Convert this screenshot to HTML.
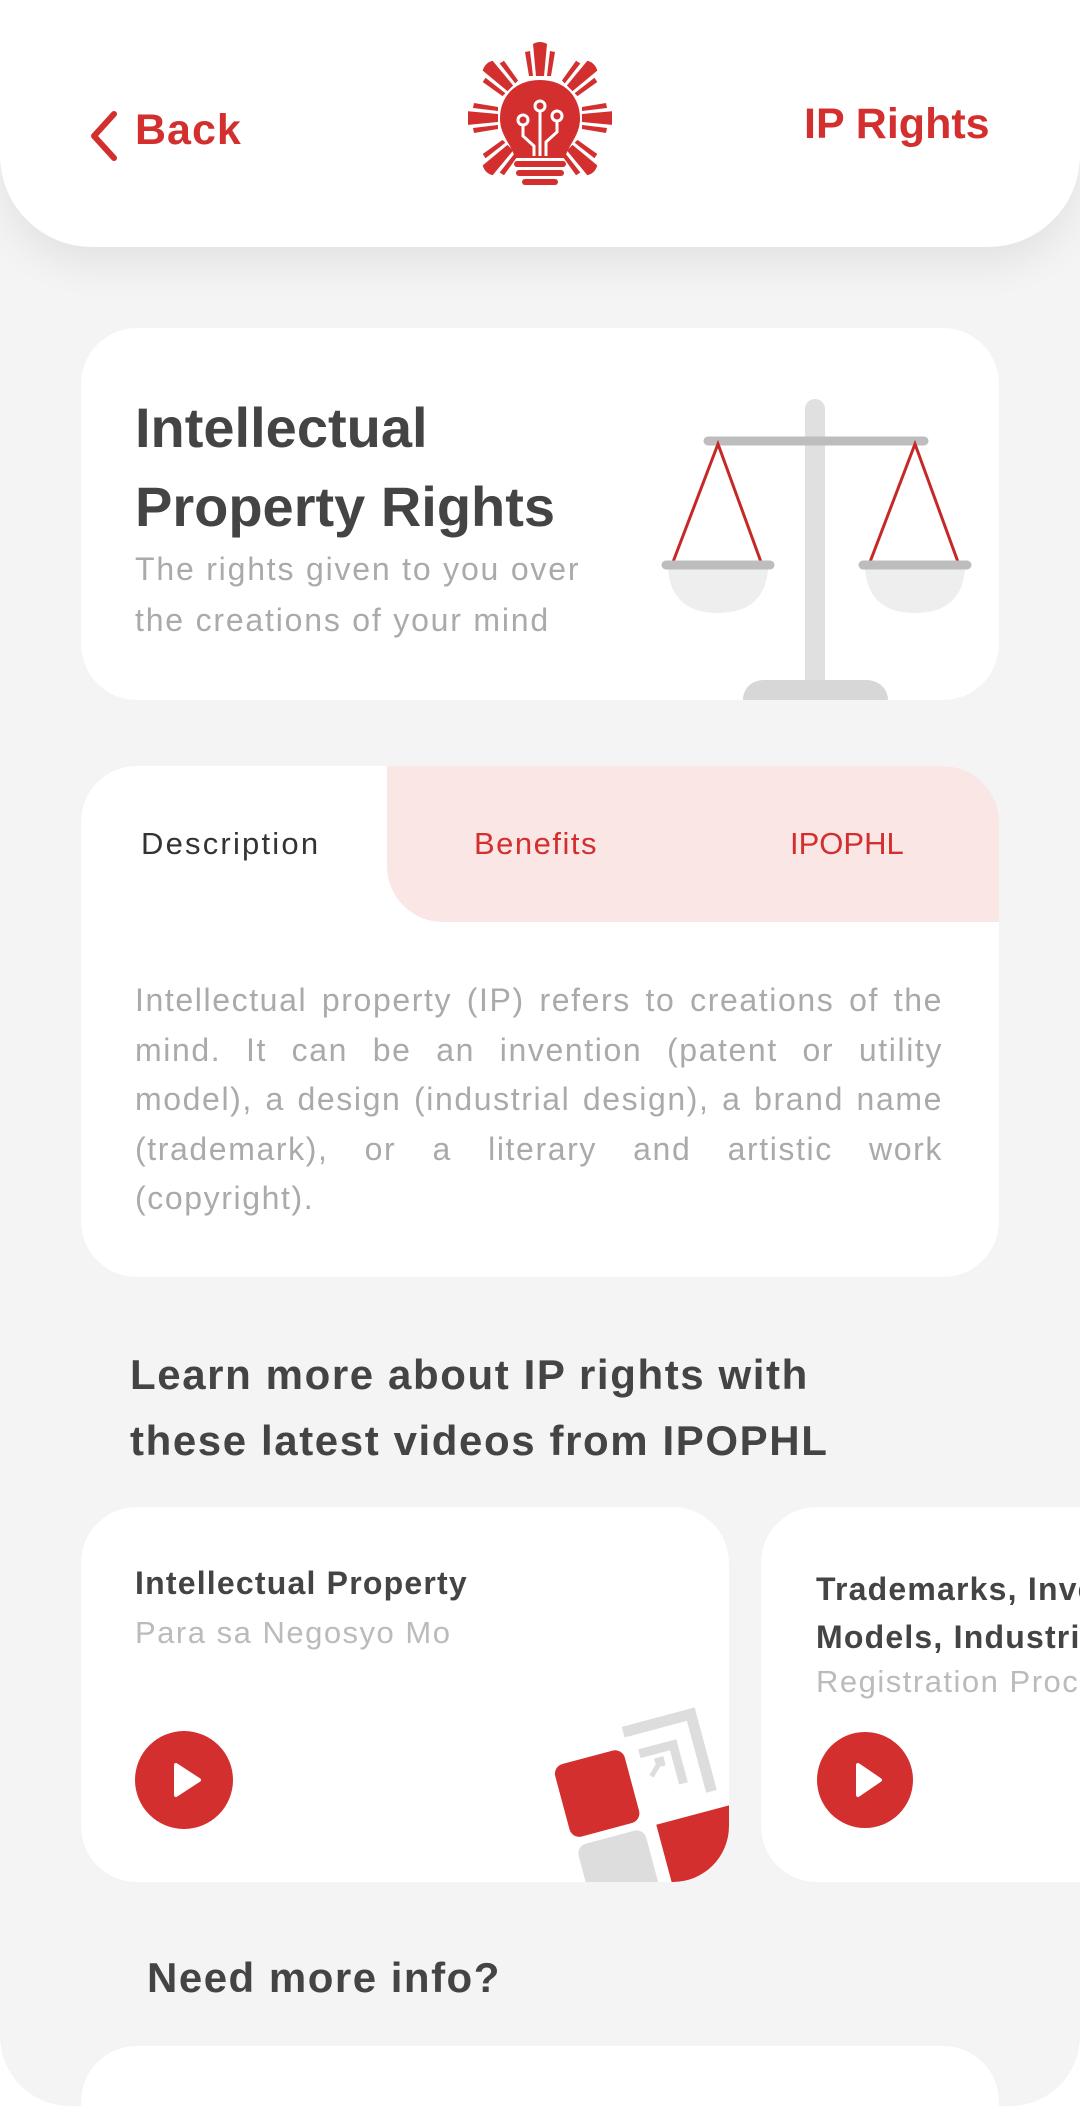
<!DOCTYPE html>
<html><head><meta charset="utf-8"><style>
*{margin:0;padding:0;box-sizing:border-box}
html,body{width:1080px;height:2106px;background:#fff;overflow:hidden;font-family:"Liberation Sans",sans-serif}
#wrap{position:absolute;left:0;top:0;width:1080px;height:2106px;background:#f4f4f4;border-radius:0 0 70px 70px;overflow:hidden}
.abs{position:absolute}
.card{position:absolute;background:#fff;border-radius:56px}
.t{position:absolute;white-space:nowrap}
</style></head><body><div id="wrap">
<div class="abs" style="left:0;top:-60px;width:1080px;height:307px;background:#fff;border-radius:0 0 92px 92px;box-shadow:0 18px 40px rgba(0,0,0,0.07)"></div>
<svg class="abs" style="left:86px;top:110px" width="36" height="52" viewBox="0 0 36 52"><path d="M28 4 L8 26 L28 48" fill="none" stroke="#d32f2f" stroke-width="6" stroke-linecap="round" stroke-linejoin="round"/></svg>
<div class="t" style="left:135px;top:106px;font-size:43px;font-weight:bold;color:#d32f2f;letter-spacing:1px">Back</div>
<div class="t" style="left:804px;top:100px;font-size:43px;font-weight:bold;color:#d32f2f">IP Rights</div>
<svg class="abs" style="left:468px;top:42px" width="144" height="148" viewBox="0 0 144 148">
<g fill="#d32f2f">
<g id="r"><path d="M65 2 Q72 -2 79 2 L76 34 L68 34 Z"/><path d="M57 10 L62 9 L65 34 L61 34 Z"/><path d="M82 9 L87 10 L83 34 L79 34 Z"/></g>
<use href="#r" transform="rotate(45 72 76)"/><use href="#r" transform="rotate(90 72 76)"/><use href="#r" transform="rotate(135 72 76)"/>
<use href="#r" transform="rotate(-45 72 76)"/><use href="#r" transform="rotate(-90 72 76)"/><use href="#r" transform="rotate(-135 72 76)"/>
<circle cx="72" cy="76" r="40" fill="#fff"/>
<path d="M72 38 C98 38 112 56 112 76 C112 94 101 101 97 116 L47 116 C43 101 32 94 32 76 C32 56 46 38 72 38 Z"/>
<rect x="46" y="119" width="52" height="6" rx="3"/><rect x="48" y="128" width="48" height="6" rx="3"/><rect x="54" y="137" width="36" height="6" rx="3"/>
</g>
<g fill="none" stroke="#fff" stroke-width="3"><circle cx="72" cy="64" r="5"/><circle cx="55" cy="78" r="5"/><circle cx="89" cy="74" r="5"/>
<path d="M72 69 V114 M55 83 V94 L66 104 V114 M89 79 V90 L78 100 V114"/></g>
</svg>

<div class="card" style="left:81px;top:328px;width:918px;height:372px;overflow:hidden">
<div class="t" style="left:54px;top:60px;font-size:56px;font-weight:bold;color:#444;line-height:79px">Intellectual<br>Property Rights</div>
<div class="t" style="left:54px;top:216px;font-size:32px;color:#aaa;line-height:51px;letter-spacing:1.8px">The rights given to you over<br>the creations of your mind</div>
<svg class="abs" style="left:0;top:0" width="918" height="372" viewBox="81 328 918 372">
<rect x="805" y="399" width="20" height="300" rx="10" fill="#e0e0e0"/>
<path d="M743 700 V700 C743 690 750 680 765 680 H866 C880 680 888 690 888 700 Z" fill="#d7d7d7"/>
<line x1="708" y1="441" x2="924" y2="441" stroke="#bdbdbd" stroke-width="9" stroke-linecap="round"/>
<path d="M668 569 H768 C766 595 752 613 718 613 C684 613 670 595 668 569 Z" fill="#eee"/>
<path d="M865 569 H965 C963 595 949 613 915 613 C881 613 867 595 865 569 Z" fill="#eee"/>
<path d="M673 562 L718 444 L761 562 M870 562 L915 444 L958 562" fill="none" stroke="#c62828" stroke-width="3"/>
<line x1="666" y1="565" x2="770" y2="565" stroke="#bdbdbd" stroke-width="9" stroke-linecap="round"/>
<line x1="863" y1="565" x2="967" y2="565" stroke="#bdbdbd" stroke-width="9" stroke-linecap="round"/>
</svg>
</div>

<div class="card" style="left:81px;top:766px;width:918px;height:511px;overflow:hidden">
<div class="abs" style="left:306px;top:0;width:612px;height:156px;background:#f9e6e5;border-radius:0 56px 0 56px"></div>
<div class="t" style="left:60px;top:60px;font-size:31px;color:#333;letter-spacing:2.2px">Description</div>
<div class="t" style="left:393px;top:60px;font-size:31px;color:#d32f2f;letter-spacing:1.5px">Benefits</div>
<div class="t" style="left:709px;top:60px;font-size:31px;color:#d32f2f">IPOPHL</div>
<div class="abs" style="left:54px;top:210px;width:808px;font-size:32px;line-height:49.5px;color:#aaa;text-align:justify;letter-spacing:1.6px">Intellectual property (IP) refers to creations of the mind. It can be an invention (patent or utility model), a design (industrial design), a brand name (trademark), or a literary and artistic work (copyright).</div>
</div>

<div class="t" style="left:130px;top:1342px;font-size:42px;font-weight:bold;color:#444;line-height:66px;letter-spacing:1.6px">Learn more about IP rights with<br>these latest videos from IPOPHL</div>

<div class="card" style="left:81px;top:1507px;width:648px;height:375px;overflow:hidden">
<div class="t" style="left:54px;top:58px;font-size:32px;font-weight:bold;color:#444;letter-spacing:1.2px">Intellectual Property</div>
<div class="t" style="left:54px;top:108px;font-size:31px;color:#bbb;letter-spacing:1.5px">Para sa Negosyo Mo</div>
<svg class="abs" style="left:54px;top:224px" width="98" height="98" viewBox="0 0 98 98"><circle cx="49" cy="49" r="49" fill="#d32f2f"/><path d="M41 34 L64 49 L41 64 Z" fill="#fff" stroke="#fff" stroke-width="4" stroke-linejoin="round"/></svg>
<svg class="abs" style="left:459px;top:193px" width="200" height="190" viewBox="540 1700 200 190">
<g transform="rotate(-15 640 1795)">
<path d="M640 1730 H710 V1810" fill="none" stroke="#ddd" stroke-width="11"/>
<path d="M650 1755 H685 V1795" fill="none" stroke="#ddd" stroke-width="9"/>
<path d="M656 1780 L670 1766 M663 1766 H670 V1773" fill="none" stroke="#ddd" stroke-width="5"/>
<rect x="563" y="1745" width="72" height="75" rx="10" fill="#d32f2f"/>
<rect x="565" y="1828" width="70" height="70" rx="10" fill="#ddd"/>
<path d="M648 1828 H725 C725 1870 700 1898 660 1898 C652 1898 648 1894 648 1888 Z" fill="#d32f2f"/>
</g></svg>
</div>

<div class="card" style="left:761px;top:1507px;width:600px;height:375px;overflow:hidden">
<div class="t" style="left:55px;top:58px;font-size:32px;font-weight:bold;color:#444;line-height:48px;letter-spacing:1.2px">Trademarks, Inventions, Utility<br>Models, Industrial Designs</div>
<div class="t" style="left:55px;top:157px;font-size:31px;color:#bbb;letter-spacing:1.5px">Registration Process</div>
<svg class="abs" style="left:55px;top:224px" width="98" height="98" viewBox="0 0 98 98"><circle cx="49" cy="49" r="48" fill="#d32f2f"/><path d="M42 34 L64 49 L42 64 Z" fill="#fff" stroke="#fff" stroke-width="4" stroke-linejoin="round"/></svg>
</div>

<div class="t" style="left:147px;top:1954px;font-size:42px;font-weight:bold;color:#444;letter-spacing:1.5px">Need more info?</div>
<div class="card" style="left:81px;top:2046px;width:918px;height:60px;border-radius:56px 56px 0 0"></div>
</div></body></html>
